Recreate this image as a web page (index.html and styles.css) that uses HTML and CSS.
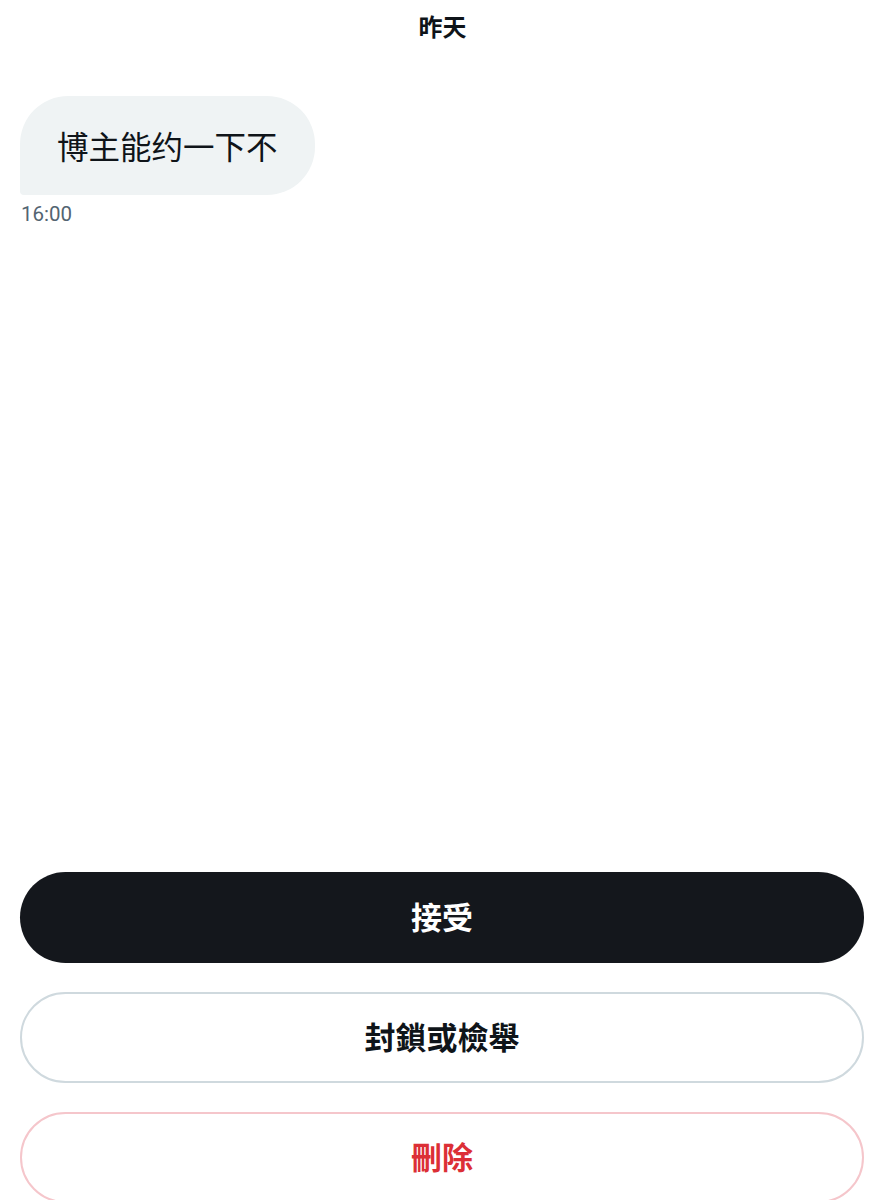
FILE: index.html
```html
<!DOCTYPE html>
<html lang="zh">
<head>
<meta charset="utf-8">
<link rel="stylesheet" href="styles.css">
</head>
<body>
<div class="page">
  <header class="day">昨天</header>
  <section class="messages">
    <div class="msg">
      <div class="bubble">博主能约一下不</div>
      <div class="time">16:00</div>
    </div>
  </section>
  <section class="actions">
    <button class="btn btn-primary">接受</button>
    <button class="btn btn-outline">封鎖或檢舉</button>
    <button class="btn btn-danger">刪除</button>
  </section>
</div>
</body>
</html>
```

FILE: styles.css
```css
* { box-sizing: border-box; }
html, body { margin: 0; padding: 0; background: #fff; }
body {
  font-family: "Noto Sans CJK TC", "Noto Sans CJK SC", "Noto Sans", sans-serif;
  color: #0f1419;
}
.page {
  width: 885px;
  height: 1200px;
  overflow: hidden;
  display: flex;
  flex-direction: column;
}
.day {
  flex-shrink: 0;
  height: 52px;
  line-height: 52px;
  text-align: center;
  font-size: 24px;
  font-weight: 700;
}
.messages {
  flex-shrink: 0;
  height: 820px;
  padding: 44px 20px 0 20px;
}
.msg {
  display: flex;
  flex-direction: column;
  align-items: flex-start;
}
.bubble {
  background: #eff3f4;
  border-radius: 48px 48px 48px 4px;
  padding: 28px 37px;
  font-family: "Noto Sans CJK SC", sans-serif;
  font-size: 31.5px;
  line-height: 43px;
  color: #0f1419;
}
.time {
  margin-top: 8px;
  margin-left: 1px;
  font-family: Roboto, "Liberation Sans", sans-serif;
  font-size: 20.5px;
  line-height: 22px;
  color: #536471;
}
.actions {
  flex-shrink: 0;
  display: flex;
  flex-direction: column;
  gap: 29px;
  padding: 0 21px 0 20px;
}
.btn {
  height: 91px;
  width: 100%;
  border-radius: 46px;
  font-family: "Noto Sans CJK TC", sans-serif;
  font-size: 31px;
  line-height: 1;
  padding: 0 0 4px 0;
  font-weight: 700;
  cursor: pointer;
  flex-shrink: 0;
}
.btn-primary {
  background: #14171c;
  color: #fff;
  border: none;
}
.btn-outline {
  background: #fff;
  color: #0f1419;
  border: 2px solid #cfd9de;
}
.btn-danger {
  background: #fff;
  color: #dc2f36;
  border: 2px solid #f5c6cb;
}
```
